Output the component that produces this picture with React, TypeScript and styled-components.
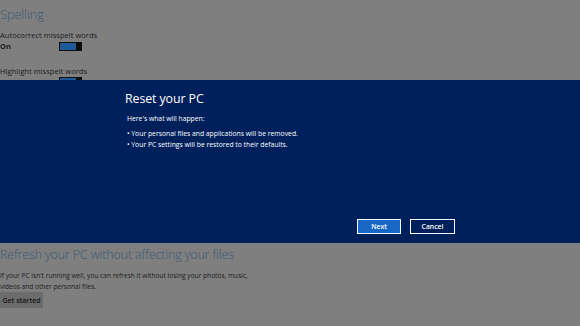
import React from 'react';
import styled, { createGlobalStyle } from 'styled-components';

const GlobalStyle = createGlobalStyle`
	html, body {
		margin: 0;
		padding: 0;
		background: #7f7f7f;
	}
	body {
		font-family: 'Open Sans', 'Liberation Sans', sans-serif;
	}
`;

const Screen = styled.div`
	width: 580px;
	height: 326px;
	display: grid;
	grid-template-rows: 80px 163px 1fr;
	background: #7f7f7f;
	overflow: hidden;
`;

const SettingsTop = styled.section`
	overflow: hidden;
	padding-top: 4px;
	display: flex;
	flex-direction: column;
`;

const SectionTitle = styled.h2<{ $size?: number }>`
	margin: 0;
	font-weight: 300;
	font-size: ${(props) => props.$size ?? 12.8}px;
	line-height: 20px;
	color: #3a5878;
	letter-spacing: -0.1px;
`;

const SettingLabel = styled.div<{ $gap?: number }>`
	font-size: 7.6px;
	line-height: 10px;
	color: #1c1c1c;
	margin-top: ${(props) => props.$gap ?? 0}px;
`;

const ToggleRow = styled.div`
	display: grid;
	grid-template-columns: 59px auto;
	align-items: center;
	height: 13px;
	margin-top: 1px;
`;

const ToggleState = styled.span`
	font-size: 7.4px;
	font-weight: 700;
	color: #1c1c1c;
`;

const Toggle = styled.span`
	grid-column: 2;
	display: flex;
	width: 23px;
	height: 9px;
	background: #0d0d0d;
`;

const ToggleFill = styled.span`
	flex: 0 0 16px;
	margin: 1px 0 1px 1px;
	background: #1d5a98;
`;

const Dialog = styled.section`
	background: #00205b;
	display: flex;
	padding: 0 0 0 124px;
`;

const DialogBody = styled.div`
	width: 331px;
	display: flex;
	flex-direction: column;
	padding: 10px 0 9px;
	color: #ffffff;
`;

const DialogTitle = styled.h1`
	margin: 0 0 0 1px;
	font-weight: 400;
	font-size: 12.4px;
	line-height: 18px;
	letter-spacing: -0.1px;
`;

const DialogText = styled.p`
	margin: 5px 0 0 3px;
	font-size: 6.8px;
	line-height: 11px;
`;

const BulletList = styled.ul`
	list-style: none;
	margin: 4px 0 0 3px;
	padding: 0;
	font-size: 6.8px;
	line-height: 11px;
`;

const ButtonRow = styled.div`
	margin-top: auto;
	display: flex;
	justify-content: flex-end;
	gap: 9px;
`;

const DialogButton = styled.button<{ $primary?: boolean }>`
	width: ${(props) => (props.$primary ? 44 : 45)}px;
	height: 15px;
	padding: 0;
	border: 1px solid #ffffff;
	background: ${(props) => (props.$primary ? '#1768c4' : '#00205b')};
	color: #ffffff;
	font-family: inherit;
	font-size: 6.8px;
	font-weight: 600;
	line-height: 13px;
`;

const RefreshSection = styled.section`
	padding-top: 2px;
	display: flex;
	flex-direction: column;
	align-items: flex-start;
`;

const RefreshText = styled.p`
	margin: 6px 0 0;
	font-size: 6.6px;
	line-height: 10.5px;
	color: #1c1c1c;
	width: 260px;
`;

const GrayButton = styled.button`
	margin-top: 0;
	width: 43px;
	height: 16px;
	padding: 0;
	border: none;
	background: #6c6c6c;
	color: #141414;
	font-family: inherit;
	font-size: 7px;
	font-weight: 600;
`;

const App = () => {
	return (
		<>
			<GlobalStyle />
			<Screen>
				<SettingsTop>
					<SectionTitle>Spelling</SectionTitle>
					<SettingLabel $gap={6}>Autocorrect misspelt words</SettingLabel>
					<ToggleRow>
						<ToggleState>On</ToggleState>
						<Toggle>
							<ToggleFill />
						</Toggle>
					</ToggleRow>
					<SettingLabel $gap={14.5}>Highlight misspelt words</SettingLabel>
					<ToggleRow>
						<Toggle>
							<ToggleFill />
						</Toggle>
					</ToggleRow>
				</SettingsTop>

				<Dialog>
					<DialogBody>
						<DialogTitle>Reset your PC</DialogTitle>
						<DialogText>Here's what will happen:</DialogText>
						<BulletList>
							<li>• Your personal files and applications will be removed.</li>
							<li>• Your PC settings will be restored to their defaults.</li>
						</BulletList>
						<ButtonRow>
							<DialogButton $primary>Next</DialogButton>
							<DialogButton>Cancel</DialogButton>
						</ButtonRow>
					</DialogBody>
				</Dialog>

				<RefreshSection>
					<SectionTitle $size={12.4}>Refresh your PC without affecting your files</SectionTitle>
					<RefreshText>
						If your PC isn't running well, you can refresh it without losing your photos, music,
						videos and other personal files.
					</RefreshText>
					<GrayButton>Get started</GrayButton>
				</RefreshSection>
			</Screen>
		</>
	);
};

export default App;
